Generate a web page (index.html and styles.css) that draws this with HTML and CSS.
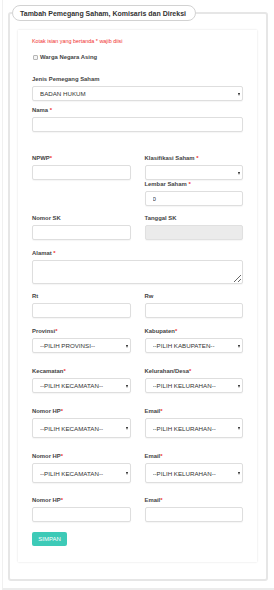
FILE: index.html
```html
<!DOCTYPE html>
<html lang="id">
<head>
    <meta charset="UTF-8">
    <meta name="viewport" content="width=device-width, initial-scale=1.0">
    <title>Tambah Pemegang Saham</title>
    <link rel="stylesheet" href="styles.css">
</head>
<body>
<div class="page">
    <fieldset class="box">
        <legend class="box-title">Tambah Pemegang Saham, Komisaris dan Direksi</legend>

        <form class="panel">
            <p class="note">Kotak isian yang bertanda * wajib diisi</p>

            <label class="check"><input type="checkbox"> Warga Negara Asing</label>

            <div class="row single loose">
                <div class="field">
                    <label>Jenis Pemegang Saham</label>
                    <div class="select"><select class="control"><option>BADAN HUKUM</option></select></div>
                </div>
            </div>

            <div class="row single tight">
                <div class="field">
                    <label>Nama <span class="req">*</span></label>
                    <input class="control" type="text">
                </div>
            </div>

            <div class="row wide">
                <div class="field">
                    <label>NPWP<span class="req">*</span></label>
                    <input class="control" type="text">
                </div>
                <div class="field">
                    <label>Klasifikasi Saham <span class="req">*</span></label>
                    <div class="select"><select class="control"><option></option></select></div>
                    <label>Lembar Saham <span class="req">*</span></label>
                    <input class="control" type="text" value="0">
                </div>
            </div>

            <div class="row">
                <div class="field">
                    <label>Nomor SK</label>
                    <input class="control" type="text">
                </div>
                <div class="field">
                    <label>Tanggal SK</label>
                    <input class="control" type="text" disabled>
                </div>
            </div>

            <div class="row single mid">
                <div class="field">
                    <label>Alamat <span class="req">*</span></label>
                    <textarea class="control area"></textarea>
                </div>
            </div>

            <div class="row">
                <div class="field">
                    <label>Rt</label>
                    <input class="control" type="text">
                </div>
                <div class="field">
                    <label>Rw</label>
                    <input class="control" type="text">
                </div>
            </div>

            <div class="row mid">
                <div class="field">
                    <label>Provinsi<span class="req">*</span></label>
                    <div class="select"><select class="control"><option>--PILIH PROVINSI--</option></select></div>
                </div>
                <div class="field">
                    <label>Kabupaten<span class="req">*</span></label>
                    <div class="select"><select class="control"><option>--PILIH KABUPATEN--</option></select></div>
                </div>
            </div>

            <div class="row loose">
                <div class="field">
                    <label>Kecamatan<span class="req">*</span></label>
                    <div class="select"><select class="control"><option>--PILIH KECAMATAN--</option></select></div>
                </div>
                <div class="field">
                    <label>Kelurahan/Desa<span class="req">*</span></label>
                    <div class="select"><select class="control"><option>--PILIH KELURAHAN--</option></select></div>
                </div>
            </div>

            <div class="row loose">
                <div class="field">
                    <label>Nomor HP<span class="req">*</span></label>
                    <div class="select"><select class="control tall"><option>--PILIH KECAMATAN--</option></select></div>
                </div>
                <div class="field">
                    <label>Email<span class="req">*</span></label>
                    <div class="select"><select class="control tall"><option>--PILIH KELURAHAN--</option></select></div>
                </div>
            </div>

            <div class="row loose">
                <div class="field">
                    <label>Nomor HP<span class="req">*</span></label>
                    <div class="select"><select class="control tall"><option>--PILIH KECAMATAN--</option></select></div>
                </div>
                <div class="field">
                    <label>Email<span class="req">*</span></label>
                    <div class="select"><select class="control tall"><option>--PILIH KELURAHAN--</option></select></div>
                </div>
            </div>

            <div class="row last">
                <div class="field">
                    <label>Nomor HP<span class="req">*</span></label>
                    <input class="control" type="text">
                </div>
                <div class="field">
                    <label>Email<span class="req">*</span></label>
                    <input class="control" type="text">
                </div>
            </div>

            <button class="btn" type="button">SIMPAN</button>
        </form>
    </fieldset>
</div>
</body>
</html>
```

FILE: styles.css
```css
body {
    margin: 0;
    background: #fff;
    font-family: "Liberation Sans", Arial, sans-serif;
    color: #444;
}
.page {
    margin-left: 2px;
    padding: 5px 6px 7px 5px;
    border-left: 1px solid #f0f0f0;
    border-bottom: 2px solid #ececec;
}
.box {
    margin: 0;
    padding: 9px 9px 17px 8px;
    border: 2px solid #e6e6e6;
    border-radius: 3px;
    min-width: 0;
}
.box-title {
    margin-left: -6px;
    padding: 0 9px 0 7px;
    height: 16px;
    line-height: 15px;
    box-sizing: border-box;
    border: 1px solid #d2d2d2;
    border-radius: 9px;
    background: #fff;
    font-size: 7px;
    font-weight: bold;
    color: #333;
}
.panel {
    background: #fff;
    padding: 8px 14px 16px;
    box-shadow: 0 0 2px rgba(0,0,0,0.13);
}
.note {
    margin: 0;
    font-size: 5.4px;
    line-height: 7px;
    color: #f0302f;
}
.check {
    display: flex;
    align-items: center;
    gap: 2px;
    margin-top: 8px;
    height: 8px;
    font-size: 5.9px;
    font-weight: bold;
    color: #444;
}
.check input {
    appearance: none;
    margin: 0 0 0 1px;
    width: 5px;
    height: 5px;
    border: 1px solid #b5b5b5;
    border-radius: 1px;
    background: #f4f4f4;
}
.row {
    display: grid;
    grid-template-columns: 1fr 1fr;
    column-gap: 14px;
    align-items: start;
    margin-top: 8px;
}
.row.single {
    grid-template-columns: 1fr;
}
.row.tight {
    margin-top: 5px;
}
.row.mid {
    margin-top: 9px;
}
.row.last {
    margin-top: 13px;
}
.row.loose {
    margin-top: 14px;
}
.row.wide {
    margin-top: 22px;
}
.field label {
    display: block;
    height: 8px;
    line-height: 8px;
    margin-bottom: 3px;
    font-size: 5.9px;
    font-weight: bold;
    color: #444;
    white-space: nowrap;
}
.req {
    color: #f0302f;
}
.control {
    display: block;
    width: 100%;
    height: 15px;
    box-sizing: border-box;
    margin: 0;
    padding: 0 7px;
    border: 1px solid #dedede;
    border-radius: 2px;
    background: #fff;
    box-shadow: 0 1px 1px rgba(0,0,0,0.04);
    font-family: "Liberation Sans", Arial, sans-serif;
    font-size: 6.2px;
    color: #333;
    outline: none;
}
.control:disabled {
    background: #ebebeb;
    border-color: #e0e0e0;
}
.control.tall {
    height: 20px;
}
.control.area {
    height: 24px;
    padding: 3px 7px;
    resize: vertical;
}
.select {
    position: relative;
}
.select select {
    appearance: none;
    padding-right: 10px;
}
.select::after {
    content: "";
    position: absolute;
    right: 3px;
    top: 50%;
    margin-top: -1px;
    border-top: 3px solid #222;
    border-left: 1.5px solid transparent;
    border-right: 1.5px solid transparent;
}
.btn {
    display: block;
    margin-top: 10px;
    width: 35px;
    height: 14px;
    padding: 0;
    border: none;
    border-radius: 2px;
    background: #3dcab7;
    color: #fff;
    font-family: "Liberation Sans", Arial, sans-serif;
    font-size: 6px;
}
```
